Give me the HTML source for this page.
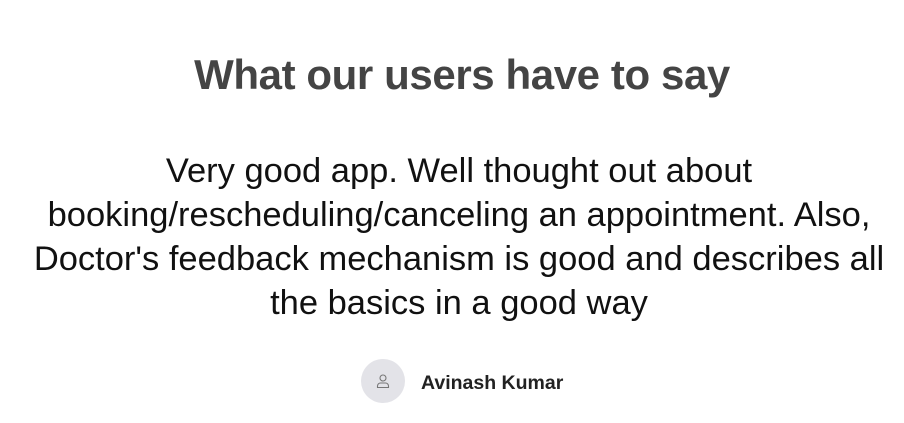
<!DOCTYPE html>
<html><head><meta charset="utf-8"><style>
html,body{margin:0;padding:0;background:#fff;width:904px;height:423px;overflow:hidden;font-family:"Liberation Sans",sans-serif;}
h1{position:absolute;top:49px;left:10px;width:904px;text-align:center;margin:0;font-size:42px;font-weight:bold;color:#444;line-height:52px;letter-spacing:-0.4px;}
.q{position:absolute;top:149px;left:7px;width:904px;text-align:center;font-size:34.5px;line-height:44px;color:#111;white-space:nowrap;}
.u{position:absolute;top:359px;left:361px;display:flex;align-items:center;}
.av{width:44px;height:44px;border-radius:50%;background:#e3e3e8;display:flex;align-items:center;justify-content:center;}
.n{margin-left:16px;font-size:19.5px;font-weight:bold;color:#222;margin-top:4px;}
</style></head><body>
<h1>What our users have to say</h1>
<div class="q">Very good app. Well thought out about<br>booking/rescheduling/canceling an appointment. Also,<br>Doctor's feedback mechanism is good and describes all<br>the basics in a good way</div>
<div class="u"><div class="av"><svg width="16" height="16" viewBox="0 0 16 16" fill="none" stroke="#777" stroke-width="1.1"><circle cx="8" cy="5" r="3"/><path d="M2.5 14.5v-1.5a3 3 0 0 1 3-3h5a3 3 0 0 1 3 3v1.5z"/></svg></div><div class="n">Avinash Kumar</div></div>
</body></html>
